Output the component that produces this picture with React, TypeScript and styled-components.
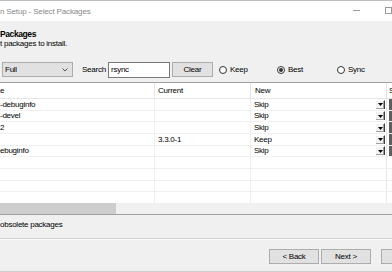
import React from "react";
import styled, { createGlobalStyle } from "styled-components";

const GlobalStyle = createGlobalStyle`
  html, body { margin: 0; padding: 0; background: #f0f0f0; overflow: hidden; }
  body { font-family: "Liberation Sans", Arial, sans-serif; }
  * { box-sizing: border-box; }
`;

const Window = styled.div`
  width: 392px;
  height: 272px;
  overflow: hidden;
  display: flex;
  flex-direction: column;
  background: #f0f0f0;
  border-top: 1px solid #bfbfbf;
  border-bottom: 1px solid #cfcfcf;
  font-size: 8px;
  letter-spacing: -0.25px;
  color: #000;
`;

const TitleBar = styled.div`
  height: 20px;
  flex: none;
  background: #fff;
  display: flex;
  align-items: center;
  color: #8a8a8a;
  letter-spacing: -0.15px;
`;

const Title = styled.span`
  flex: 1;
  white-space: nowrap;
`;

const MinIcon = styled.span`
  flex: none;
  width: 7px;
  height: 1px;
  margin-top: -1px;
  background: #9a9a9a;
  margin-right: 25px;
`;

const MaxIcon = styled.span`
  flex: none;
  width: 7px;
  height: 7px;
  margin-top: -1px;
  border: 1px solid #9a9a9a;
`;

const Header = styled.div`
  height: 41px;
  flex: none;
  padding-top: 8px;
`;

const HeadTitle = styled.div`
  font-weight: bold;
  font-size: 8.5px;
  letter-spacing: -0.4px;
  line-height: 10px;
  white-space: nowrap;
`;

const HeadSub = styled.div`
  line-height: 10px;
  white-space: nowrap;
`;

const Toolbar = styled.div`
  flex: none;
  height: 15px;
  display: flex;
  align-items: center;
`;

const Combo = styled.div`
  flex: none;
  margin-left: 2px;
  width: 71px;
  height: 15px;
  background: #e1e1e1;
  border: 1px solid #adadad;
  display: flex;
  align-items: center;
  justify-content: space-between;
  padding: 0 4px 0 2px;
`;

const FieldLabel = styled.span`
  flex: none;
  width: 26px;
  margin-left: 9px;
  white-space: nowrap;
`;

const SearchInput = styled.input`
  flex: none;
  width: 62px;
  height: 16px;
  margin: 0;
  padding: 0 0 0 2px;
  border: 1px solid #7a7a7a;
  background: #fff;
  font: inherit;
  letter-spacing: inherit;
  color: #000;
  outline: none;
`;

const PushButton = styled.button<{ $w: number; $ml?: number }>`
  flex: none;
  width: ${(p) => p.$w}px;
  height: 15px;
  margin: 0 0 0 ${(p) => p.$ml ?? 0}px;
  padding: 0;
  background: #e1e1e1;
  border: 1px solid #adadad;
  font: inherit;
  letter-spacing: inherit;
  color: #000;
  white-space: nowrap;
  overflow: hidden;
`;

const RadioItem = styled.label<{ $w?: number; $ml?: number }>`
  flex: none;
  display: flex;
  align-items: center;
  width: ${(p) => (p.$w ? `${p.$w}px` : "auto")};
  margin-left: ${(p) => p.$ml ?? 0}px;
  white-space: nowrap;
`;

const RadioCircle = styled.span<{ $on?: boolean }>`
  flex: none;
  width: 8px;
  height: 8px;
  border-radius: 50%;
  border: 1px solid #333;
  background: #fff;
  margin-right: 3px;
  display: flex;
  align-items: center;
  justify-content: center;
  &::after {
    content: "";
    width: 4px;
    height: 4px;
    border-radius: 50%;
    background: ${(p) => (p.$on ? "#333" : "transparent")};
  }
`;

const List = styled.div`
  flex: none;
  margin-top: 5px;
  border-top: 1px solid #a0a0a0;
  border-bottom: 1px solid #a0a0a0;
  background: #fff;
`;

const HeaderRow = styled.div`
  display: flex;
  height: 16px;
  border-bottom: 1px solid #e5e5e5;
`;

const Cell = styled.div<{ $w?: number; $pl?: number; $line?: string }>`
  flex: ${(p) => (p.$w ? "none" : "1")};
  width: ${(p) => (p.$w ? `${p.$w}px` : "auto")};
  padding-left: ${(p) => p.$pl ?? 0}px;
  border-right: ${(p) => (p.$line ? `1px solid ${p.$line}` : "none")};
  display: flex;
  align-items: center;
  white-space: nowrap;
  overflow: hidden;
`;

const CellText = styled.span`
  flex: 1;
  white-space: nowrap;
`;

const Body = styled.div`
  height: 104px;
  overflow: hidden;
`;

const Row = styled.div`
  display: flex;
  height: 11.6667px;
  border-bottom: 1px solid #f0f0f0;
`;

const DropButton = styled.span`
  flex: none;
  width: 10px;
  height: 9px;
  margin-right: 1px;
  background: #f2f2f2;
  border-top: 1px solid #fff;
  border-left: 1px solid #fff;
  border-right: 1px solid #3c3c3c;
  box-shadow: inset -1px -1px 0 #a0a0a0;
  display: flex;
  align-items: center;
  justify-content: center;
`;

const StateBar = styled.span`
  flex: none;
  width: 3px;
  height: 100%;
  margin-left: 2px;
  background: #5e5e5e;
`;

const ScrollBar = styled.div`
  height: 11px;
  background: #f0f0f0;
  display: flex;
`;

const ScrollThumb = styled.div`
  width: 116px;
  height: 100%;
  background: #cdcdcd;
`;

const CheckRow = styled.div`
  flex: none;
  margin-top: 4px;
  height: 12px;
  line-height: 12px;
  white-space: nowrap;
`;

const Separator = styled.div`
  flex: none;
  margin-top: 7px;
  height: 2px;
  border-top: 1px solid #d2d2d2;
  border-bottom: 1px solid #fbfbfb;
`;

const ButtonBar = styled.div`
  flex: none;
  margin-top: 9px;
  padding-left: 269px;
  display: flex;
  overflow: hidden;
`;

const Chevron = () => (
  <svg width="6" height="4" viewBox="0 0 6 4">
    <polyline points="0.5,0.5 3,3 5.5,0.5" fill="none" stroke="#555" strokeWidth="1" />
  </svg>
);

const DownTriangle = () => (
  <svg width="5" height="3" viewBox="0 0 5 3">
    <polygon points="0,0 5,0 2.5,3" fill="#000" />
  </svg>
);

type Pkg = { name: string; current: string; action: string };

const packages: Pkg[] = [
  { name: "-debuginfo", current: "", action: "Skip" },
  { name: "-devel", current: "", action: "Skip" },
  { name: "2", current: "", action: "Skip" },
  { name: "", current: "3.3.0-1", action: "Keep" },
  { name: "ebuginfo", current: "", action: "Skip" },
];

const COLS = { name: 155, current: 96, action: 136 };

export default function App() {
  const emptyRows = 4;
  return (
    <>
      <GlobalStyle />
      <Window>
        <TitleBar>
          <Title>n Setup - Select Packages</Title>
          <MinIcon />
          <MaxIcon />
        </TitleBar>
        <Header>
          <HeadTitle>Packages</HeadTitle>
          <HeadSub>t packages to install.</HeadSub>
        </Header>
        <Toolbar>
          <Combo>
            <span>Full</span>
            <Chevron />
          </Combo>
          <FieldLabel>Search</FieldLabel>
          <SearchInput defaultValue="rsync" readOnly />
          <PushButton $w={41} $ml={2}>Clear</PushButton>
          <RadioItem $w={58} $ml={6}>
            <RadioCircle />
            Keep
          </RadioItem>
          <RadioItem $w={60}>
            <RadioCircle $on />
            Best
          </RadioItem>
          <RadioItem>
            <RadioCircle />
            Sync
          </RadioItem>
        </Toolbar>
        <List>
          <HeaderRow>
            <Cell $w={COLS.name} $line="#e5e5e5">e</Cell>
            <Cell $w={COLS.current} $pl={3} $line="#e5e5e5">Current</Cell>
            <Cell $w={COLS.action} $pl={4} $line="#e5e5e5">New</Cell>
            <Cell $pl={2}>S</Cell>
          </HeaderRow>
          <Body>
            {packages.map((p, i) => (
              <Row key={i}>
                <Cell $w={COLS.name} $line="#f0f0f0">{p.name}</Cell>
                <Cell $w={COLS.current} $pl={3} $line="#f0f0f0">{p.current}</Cell>
                <Cell $w={COLS.action} $pl={3} $line="#e8e8e8">
                  <CellText>{p.action}</CellText>
                  <DropButton>
                    <DownTriangle />
                  </DropButton>
                </Cell>
                <Cell>
                  <StateBar />
                </Cell>
              </Row>
            ))}
            {Array.from({ length: emptyRows }).map((_, i) => (
              <Row key={`e${i}`}>
                <Cell $w={COLS.name} $line="#f0f0f0" />
                <Cell $w={COLS.current} $line="#f0f0f0" />
                <Cell $w={COLS.action} $line="#e8e8e8" />
                <Cell />
              </Row>
            ))}
          </Body>
          <ScrollBar>
            <ScrollThumb />
          </ScrollBar>
        </List>
        <CheckRow>obsolete packages</CheckRow>
        <Separator />
        <ButtonBar>
          <PushButton $w={50}>&lt; Back</PushButton>
          <PushButton $w={50} $ml={2}>Next &gt;</PushButton>
          <PushButton $w={50} $ml={10}>Cancel</PushButton>
        </ButtonBar>
      </Window>
    </>
  );
}
